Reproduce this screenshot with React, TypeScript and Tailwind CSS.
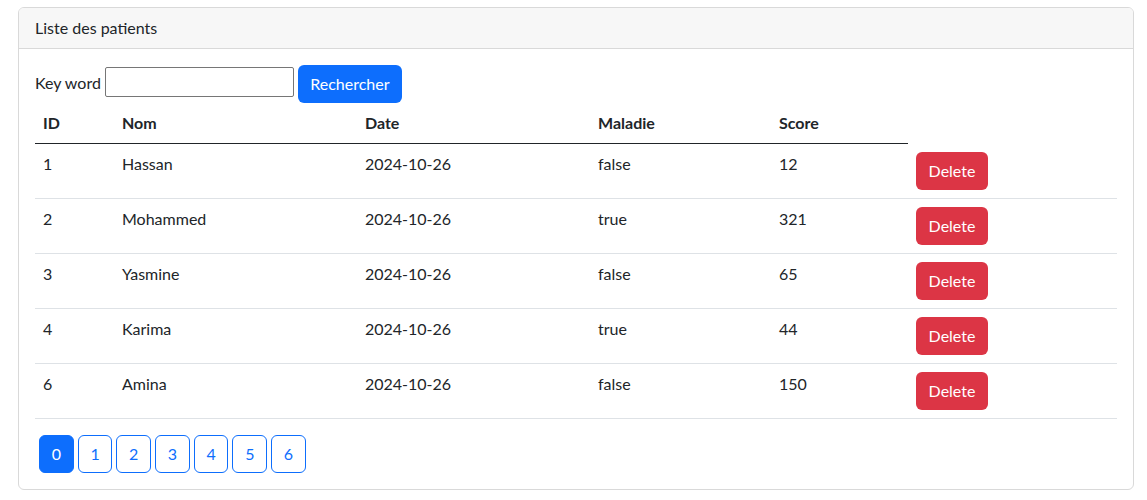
import React from "react";

type Patient = {
  id: number;
  nom: string;
  date: string;
  malade: boolean;
  score: number;
};

const PATIENTS: Patient[] = [
  { id: 1, nom: "Hassan", date: "2024-10-26", malade: false, score: 12 },
  { id: 2, nom: "Mohammed", date: "2024-10-26", malade: true, score: 321 },
  { id: 3, nom: "Yasmine", date: "2024-10-26", malade: false, score: 65 },
  { id: 4, nom: "Karima", date: "2024-10-26", malade: true, score: 44 },
  { id: 6, nom: "Amina", date: "2024-10-26", malade: false, score: 150 },
];

const PAGES = [0, 1, 2, 3, 4, 5, 6];

export default function App() {
  const currentPage = 0;

  return (
    <div
      className="min-h-[500px] bg-white pt-[7px] pl-[18px] text-[16px] leading-6 text-[#212529]"
      style={{ fontFamily: '"Lato", "Noto Sans", sans-serif' }}
    >
      <div className="w-[1116px] overflow-hidden rounded-md border border-[#d9d9d9] bg-white">
        <div className="h-[41px] border-b border-[#d9d9d9] bg-[#f7f7f7] px-4 py-2">
          Liste des patients
        </div>

        <div className="p-4">
          <form className="flex items-center" onSubmit={(e) => e.preventDefault()}>
            <label htmlFor="kw" className="mb-[2px]">
              Key word
            </label>
            <input
              id="kw"
              type="text"
              className="mb-[4px] ml-[4px] h-[30px] w-[189px] rounded-[2px] border border-[#767676] px-1 outline-none"
            />
            <button
              type="submit"
              className="ml-1 h-[38px] w-[104px] rounded-md bg-[#0d6efd] text-white"
            >
              Rechercher
            </button>
          </form>

          <table className="w-[1082px] table-fixed border-collapse text-left">
            <colgroup>
              <col className="w-[79px]" />
              <col className="w-[243px]" />
              <col className="w-[233px]" />
              <col className="w-[181px]" />
              <col className="w-[137px]" />
              <col className="w-[209px]" />
            </colgroup>
            <thead>
              <tr>
                {["ID", "Nom", "Date", "Maladie", "Score"].map((h) => (
                  <th
                    key={h}
                    className="border-b border-[#212529] px-2 py-2 font-bold"
                  >
                    {h}
                  </th>
                ))}
              </tr>
            </thead>
            <tbody>
              {PATIENTS.map((p) => (
                <tr key={p.id} className="border-b border-[#dee2e6]">
                  <td className="px-2 py-2 align-top">{p.id}</td>
                  <td className="px-2 py-2 align-top">{p.nom}</td>
                  <td className="px-2 py-2 align-top">{p.date}</td>
                  <td className="px-2 py-2 align-top">
                    {p.malade ? "true" : "false"}
                  </td>
                  <td className="px-2 py-2 align-top">{p.score}</td>
                  <td className="px-2 py-2 align-top">
                    <button className="h-[38px] w-[72px] rounded-md bg-[#dc3545] text-white">
                      Delete
                    </button>
                  </td>
                </tr>
              ))}
            </tbody>
          </table>

          <ul className="mt-4 flex">
            {PAGES.map((n) => (
              <li key={n} className="ml-1">
                <button
                  className={`h-[38px] w-[34.7px] rounded-md border border-[#0d6efd] ${
                    n === currentPage
                      ? "bg-[#0d6efd] text-white"
                      : "bg-white text-[#0d6efd]"
                  }`}
                >
                  {n}
                </button>
              </li>
            ))}
          </ul>
        </div>
      </div>
    </div>
  );
}
